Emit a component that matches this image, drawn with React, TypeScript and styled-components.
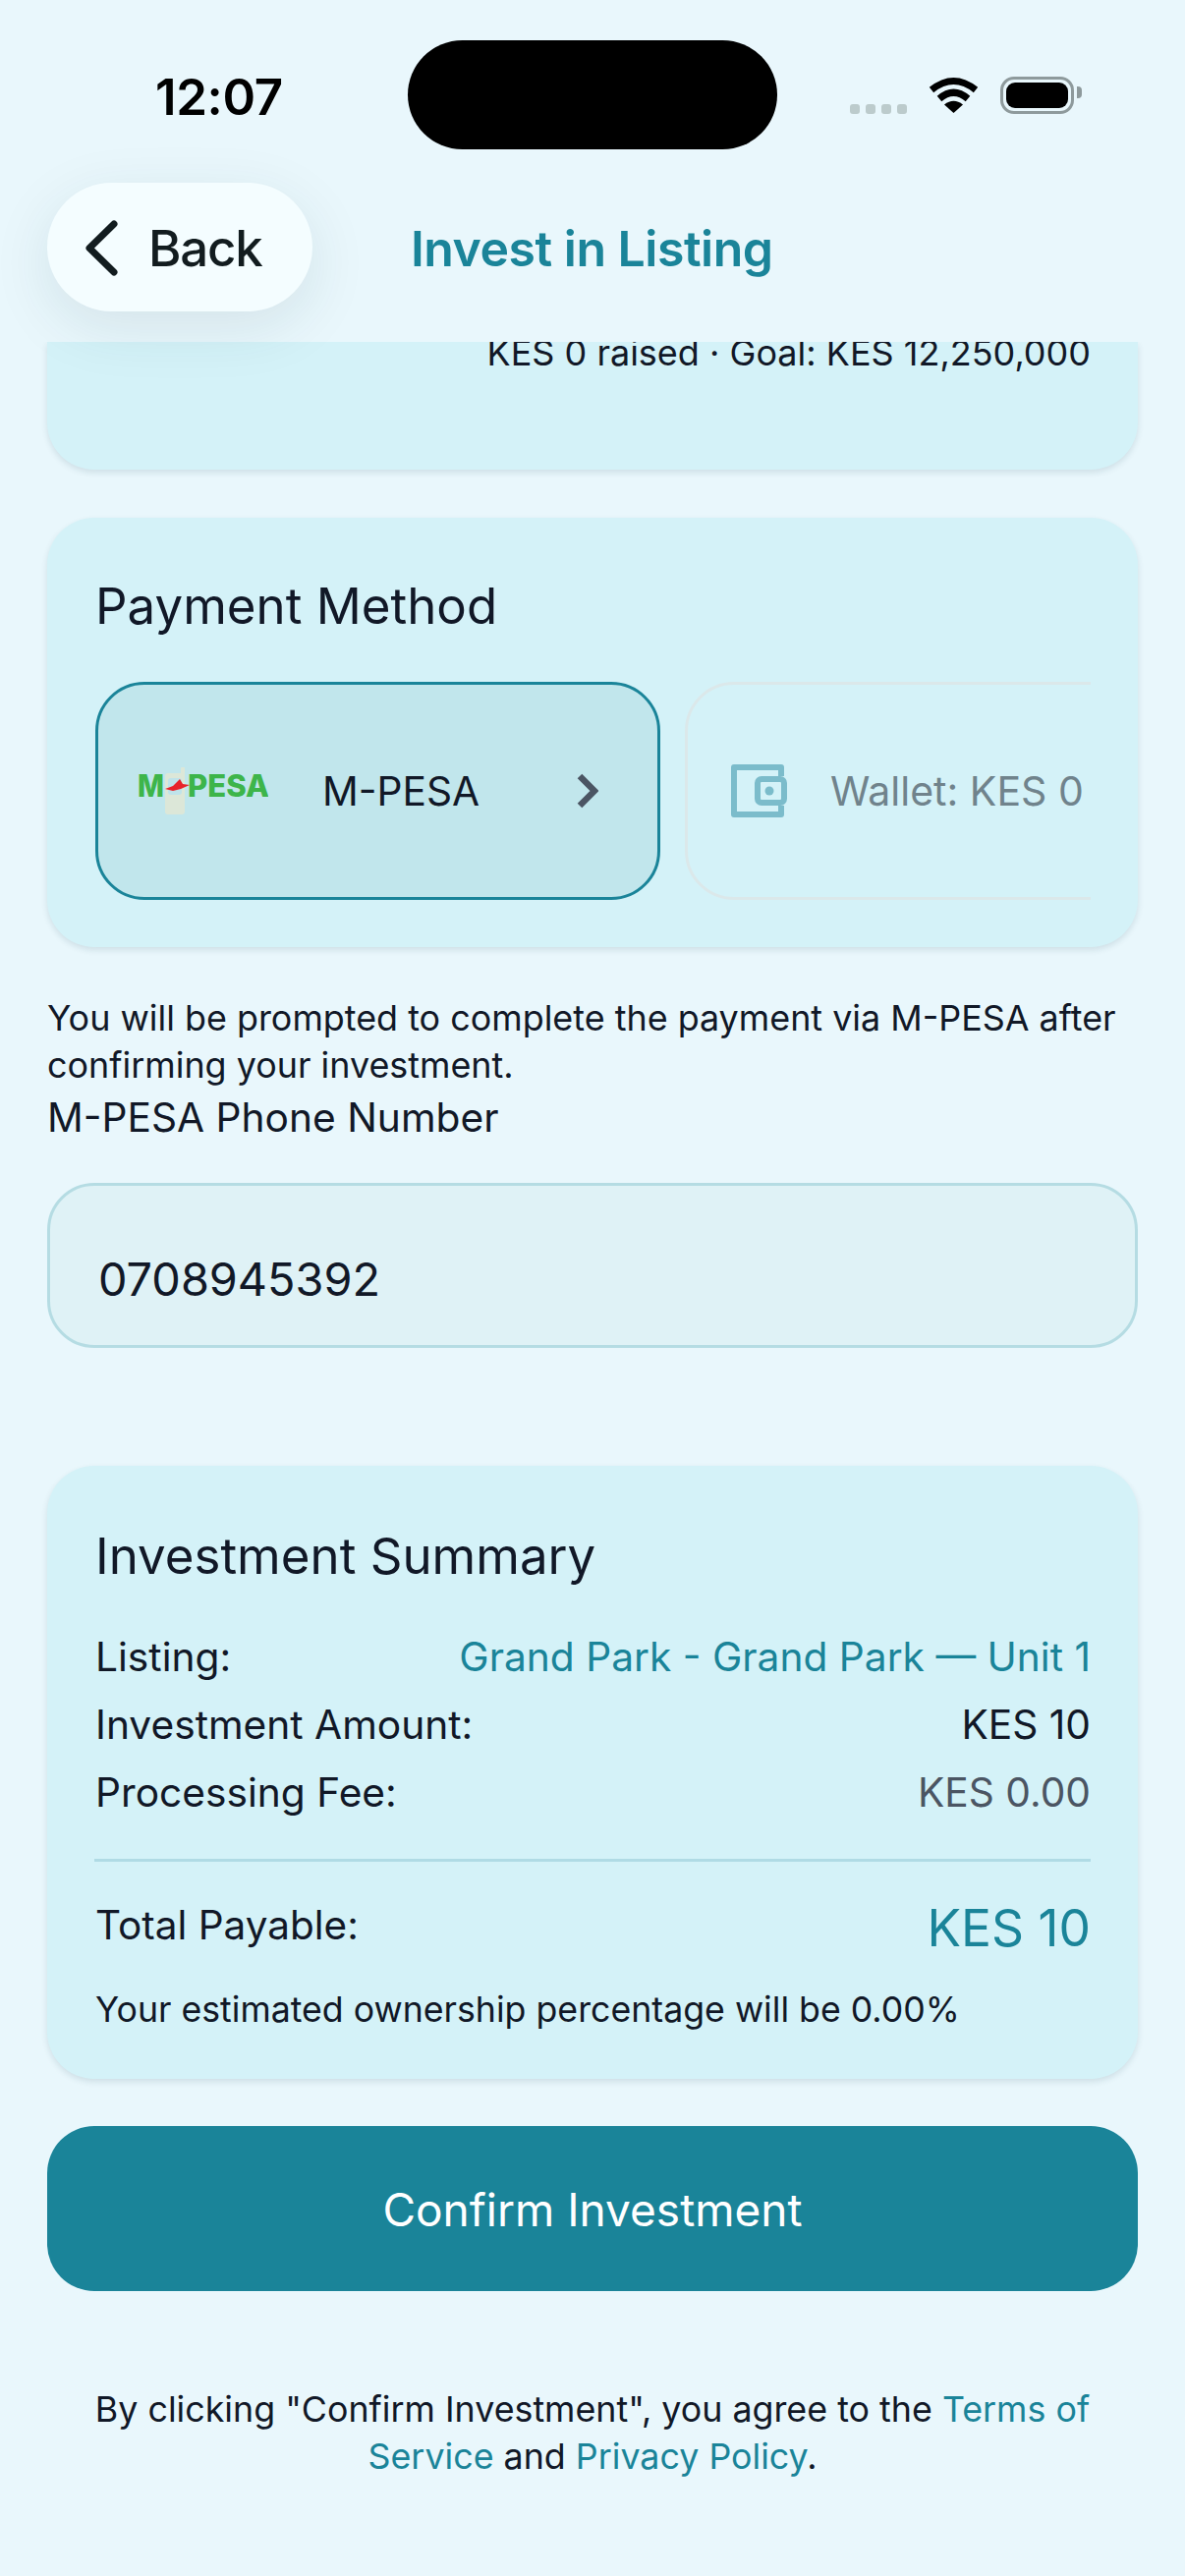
import styled, { createGlobalStyle } from "styled-components";

const TEAL = "#1a8499";
const INK = "#111827";
const CARD_BG = "#d4f2f8";

const GlobalStyle = createGlobalStyle`
  html, body {
    margin: 0;
    padding: 0;
    background: #e9f7fc;
  }
  * {
    box-sizing: border-box;
  }
`;

const Page = styled.div`
  width: 1206px;
  height: 2622px;
  overflow: hidden;
  background: #e9f7fc;
  color: ${INK};
  font-family: Inter, "Liberation Sans", sans-serif;
`;

const Header = styled.header`
  position: relative;
  z-index: 2;
  height: 348px;
  padding-top: 41px;
  background: #e9f7fc;
`;

const StatusBar = styled.div`
  display: flex;
  align-items: center;
  height: 111px;
  padding-left: 158px;
`;

const Time = styled.span`
  width: 257px;
  padding-top: 3px;
  font-size: 51px;
  font-weight: 600;
  letter-spacing: -0.4px;
  color: #000;
`;

const Island = styled.div`
  width: 376px;
  height: 111px;
  border-radius: 56px;
  background: #000;
`;

const StatusIcons = styled.div`
  display: flex;
  align-items: center;
  margin-left: 74px;
`;

const SignalDots = styled.div`
  display: flex;
  gap: 6px;
  margin-top: 28px;
  margin-right: 22px;
`;

const SignalDot = styled.span`
  width: 10px;
  height: 10px;
  border-radius: 3px;
  background: #bccbcc;
`;

const Battery = styled.div`
  position: relative;
  width: 75px;
  height: 38px;
  margin-left: 22px;
  padding: 3px;
  border: 3px solid #8e9a9c;
  border-radius: 14px;
`;

const BatteryFill = styled.div`
  width: 100%;
  height: 100%;
  border-radius: 9px;
  background: #000;
`;

const BatteryNub = styled.span`
  position: absolute;
  top: 7px;
  right: -11px;
  width: 5px;
  height: 12px;
  border-radius: 0 4px 4px 0;
  background: #8e9a9c;
`;

const Nav = styled.nav`
  display: flex;
  align-items: center;
  margin-top: 34px;
  padding-left: 48px;
`;

const BackButton = styled.button`
  display: flex;
  align-items: center;
  gap: 31px;
  width: 270px;
  height: 131px;
  padding: 2px 0 0 39px;
  border: none;
  border-radius: 66px;
  background: #f4fdff;
  box-shadow: 0 16px 60px rgba(20, 60, 70, 0.1);
  color: #121c1f;
  font-family: inherit;
  font-size: 51px;
  font-weight: 500;
  letter-spacing: -1.2px;
`;

const NavTitle = styled.h1`
  margin: 2px 0 0 100px;
  color: ${TEAL};
  font-size: 50px;
  font-weight: 600;
  letter-spacing: -0.5px;
`;

const Content = styled.main`
  display: flex;
  flex-direction: column;
  padding: 0 48px;
`;

const Card = styled.section`
  border-radius: 48px;
  background: ${CARD_BG};
  box-shadow: 0 3px 6px rgba(20, 60, 70, 0.12);
`;

const ListingStub = styled(Card)`
  height: 130px;
  padding-right: 48px;
  overflow: hidden;
  border-radius: 0 0 48px 48px;
  text-align: right;
`;

const StubText = styled.div`
  margin-top: -13px;
  font-size: 36px;
  line-height: 48px;
`;

const PaymentCard = styled(Card)`
  margin-top: 49px;
  height: 437px;
  padding: 60px 48px 48px 49px;
`;

const CardTitle = styled.h2`
  margin: 0;
  font-size: 51px;
  font-weight: 400;
  line-height: 60px;
`;

const MethodRow = styled.div`
  display: flex;
  gap: 25px;
  margin-top: 47px;
  overflow: hidden;
`;

const Method = styled.div<{ $active?: boolean }>`
  flex: none;
  display: flex;
  align-items: center;
  width: ${(p) => (p.$active ? "575px" : "600px")};
  height: 222px;
  padding: ${(p) => (p.$active ? "0 60px 0 40px" : "0 0 0 44px")};
  border: 3px solid ${(p) => (p.$active ? TEAL : "#dbe8ea")};
  border-radius: 50px;
  background: ${(p) => (p.$active ? "#c1e6ec" : "transparent")};
`;

const MethodLabel = styled.span`
  margin-left: 55px;
  font-size: 40.7px;
`;

const WalletLabel = styled.span`
  margin-left: 44px;
  color: #70838c;
  font-size: 41px;
`;

const ChevronWrap = styled.span`
  display: flex;
  margin-left: auto;
`;

const Note = styled.p`
  margin: 48px 0 0;
  font-size: 35.9px;
  line-height: 48px;
`;

const FieldLabel = styled.label`
  display: block;
  margin-top: 6px;
  font-size: 40.7px;
  line-height: 48px;
`;

const PhoneInput = styled.input`
  display: block;
  width: 100%;
  height: 168px;
  margin-top: 42px;
  padding: 28px 0 0 49px;
  border: 3px solid #b5dce3;
  border-radius: 48px;
  background: #dff2f6;
  color: ${INK};
  font-family: inherit;
  font-size: 46.8px;
  outline: none;
`;

const SummaryCard = styled(Card)`
  margin-top: 120px;
  padding: 62px 48px 47px 49px;
`;

const SummaryRows = styled.div`
  margin-top: 38px;
`;

const Row = styled.div`
  display: flex;
  justify-content: space-between;
  font-size: 40.7px;
  line-height: 69px;
`;

const Value = styled.span<{ $tone?: "teal" | "muted" }>`
  color: ${(p) =>
    p.$tone === "teal" ? TEAL : p.$tone === "muted" ? "#4b5563" : INK};
`;

const Divider = styled.hr`
  height: 3px;
  margin: 33px 0 0 -1px;
  border: none;
  background: #b0dbe5;
`;

const TotalRow = styled.div`
  display: flex;
  justify-content: space-between;
  align-items: center;
  margin-top: 37px;
`;

const TotalLabel = styled.span`
  padding-bottom: 6px;
  font-size: 40.5px;
`;

const TotalValue = styled.span`
  color: ${TEAL};
  font-size: 51.5px;
  line-height: 60px;
`;

const Estimate = styled.p`
  margin: 29px 0 0;
  font-size: 35.7px;
  line-height: 48px;
`;

const ConfirmButton = styled.button`
  width: 100%;
  height: 168px;
  margin-top: 48px;
  padding-top: 2px;
  border: none;
  border-radius: 48px;
  background: ${TEAL};
  color: #fff;
  font-family: inherit;
  font-size: 46px;
  font-weight: 400;
`;

const Legal = styled.p`
  margin: 96px 0 0;
  padding: 0 48px;
  font-size: 35.8px;
  line-height: 48px;
  text-align: center;
`;

const LegalLink = styled.a`
  color: ${TEAL};
`;

const WifiIcon = () => (
  <svg width="51" height="37" viewBox="0 0 51 37" fill="none">
    <path d="M3 13.5 Q25.5 -4.5 48 13.5" stroke="#000" strokeWidth="7" />
    <path d="M11 22.5 Q25.5 10 40 22.5" stroke="#000" strokeWidth="7" />
    <path d="M25.5 37 L16 28.5 Q25.5 21 35 28.5 Z" fill="#000" />
  </svg>
);

const BackChevron = () => (
  <svg width="33" height="57" viewBox="0 0 33 57" fill="none">
    <path
      d="M29 4 L4 28.5 L29 53"
      stroke="#121c1f"
      strokeWidth="7"
      strokeLinecap="round"
      strokeLinejoin="round"
    />
  </svg>
);

const MethodChevron = () => (
  <svg width="22" height="36" viewBox="0 0 22 36" fill="none">
    <path d="M3 3 L18 18 L3 33" stroke="#4b5563" strokeWidth="6.5" />
  </svg>
);

const MpesaLogo = () => (
  <svg width="133" height="48" viewBox="0 0 133 48">
    <rect x="28" y="6" width="20" height="42" rx="3" fill="#dce7d8" />
    <rect x="44" y="0" width="4" height="8" rx="1" fill="#dce7d8" />
    <rect x="31" y="11" width="14" height="17" rx="3" fill="#bfe3ea" />
    <text
      x="0"
      y="30"
      fontFamily="Inter, sans-serif"
      fontSize="31"
      fontWeight="800"
      fill="#3db54a"
      textLength="27"
      lengthAdjust="spacingAndGlyphs"
    >
      M
    </text>
    <text
      x="51"
      y="30"
      fontFamily="Inter, sans-serif"
      fontSize="31"
      fontWeight="800"
      fill="#3db54a"
      textLength="83"
      lengthAdjust="spacingAndGlyphs"
    >
      PESA
    </text>
    <path
      d="M28 22 L36 19 L43 12 L46 17 L53 18 L44 22 L36 24 Z"
      fill="#e8222a"
    />
  </svg>
);

const WalletIcon = () => (
  <svg width="57" height="54" viewBox="0 0 57 54" fill="none">
    <path
      d="M51 12 V3 H3 V51 H51 V42"
      stroke="#7bbccb"
      strokeWidth="6"
      strokeLinejoin="round"
    />
    <rect
      x="27"
      y="15"
      width="27"
      height="24"
      rx="4"
      stroke="#7bbccb"
      strokeWidth="6"
    />
    <circle cx="39" cy="27" r="4.5" fill="#7bbccb" />
  </svg>
);

export default function App() {
  return (
    <Page>
      <GlobalStyle />
      <Header>
        <StatusBar>
          <Time>12:07</Time>
          <Island />
          <StatusIcons>
            <SignalDots>
              <SignalDot />
              <SignalDot />
              <SignalDot />
              <SignalDot />
            </SignalDots>
            <WifiIcon />
            <Battery>
              <BatteryFill />
              <BatteryNub />
            </Battery>
          </StatusIcons>
        </StatusBar>
        <Nav>
          <BackButton>
            <BackChevron />
            Back
          </BackButton>
          <NavTitle>Invest in Listing</NavTitle>
        </Nav>
      </Header>

      <Content>
        <ListingStub>
          <StubText>KES 0 raised · Goal: KES 12,250,000</StubText>
        </ListingStub>

        <PaymentCard>
          <CardTitle>Payment Method</CardTitle>
          <MethodRow>
            <Method $active>
              <MpesaLogo />
              <MethodLabel>M-PESA</MethodLabel>
              <ChevronWrap>
                <MethodChevron />
              </ChevronWrap>
            </Method>
            <Method>
              <WalletIcon />
              <WalletLabel>Wallet: KES 0</WalletLabel>
            </Method>
          </MethodRow>
        </PaymentCard>

        <Note>
          You will be prompted to complete the payment via M-PESA after
          confirming your investment.
        </Note>
        <FieldLabel>M-PESA Phone Number</FieldLabel>
        <PhoneInput readOnly value="0708945392" />

        <SummaryCard>
          <CardTitle>Investment Summary</CardTitle>
          <SummaryRows>
            <Row>
              <span>Listing:</span>
              <Value $tone="teal">Grand Park - Grand Park — Unit 1</Value>
            </Row>
            <Row>
              <span>Investment Amount:</span>
              <Value>KES 10</Value>
            </Row>
            <Row>
              <span>Processing Fee:</span>
              <Value $tone="muted">KES 0.00</Value>
            </Row>
          </SummaryRows>
          <Divider />
          <TotalRow>
            <TotalLabel>Total Payable:</TotalLabel>
            <TotalValue>KES 10</TotalValue>
          </TotalRow>
          <Estimate>Your estimated ownership percentage will be 0.00%</Estimate>
        </SummaryCard>

        <ConfirmButton>Confirm Investment</ConfirmButton>

        <Legal>
          By clicking "Confirm Investment", you agree to the{" "}
          <LegalLink>Terms of Service</LegalLink> and{" "}
          <LegalLink>Privacy Policy</LegalLink>.
        </Legal>
      </Content>
    </Page>
  );
}
